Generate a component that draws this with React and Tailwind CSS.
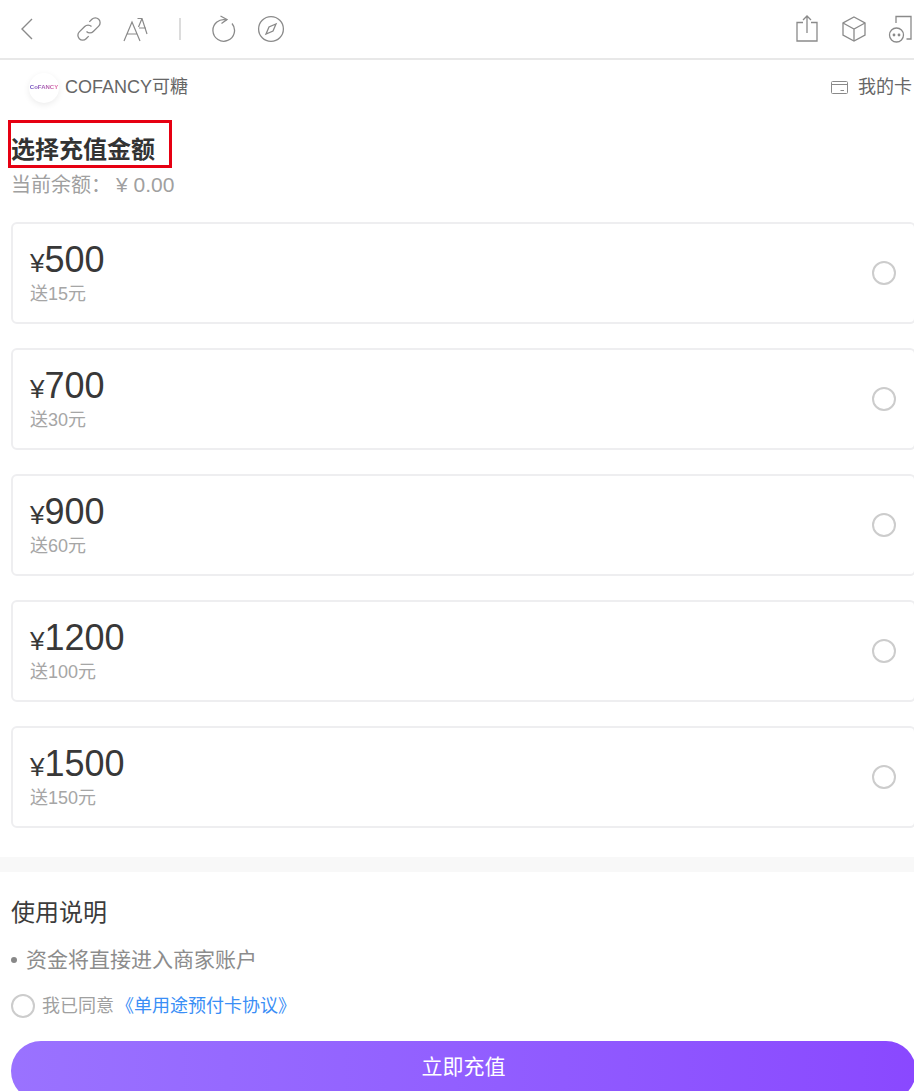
const font = { fontFamily: '"Liberation Sans", "Noto Sans CJK SC", sans-serif' };

const plans = [
    { amount: "500", bonus: "送15元" },
    { amount: "700", bonus: "送30元" },
    { amount: "900", bonus: "送60元" },
    { amount: "1200", bonus: "送100元" },
    { amount: "1500", bonus: "送150元" },
];

function BackIcon() {
    return (
        <svg width="16" height="24" viewBox="0 0 16 24" fill="none" stroke="#8a8a8a" strokeWidth="1.4">
            <path d="M12 2 L2 12 L12 22" />
        </svg>
    );
}

function LinkIcon() {
    return (
        <svg width="26" height="26" viewBox="0 0 26 26" fill="none" stroke="#8a8a8a" strokeWidth="1.3">
            <path d="M10.5 15.5 a4.8 4.8 0 0 0 6.8 0 l5.4 -5.4 a4.8 4.8 0 0 0 -6.8 -6.8 l-2.6 2.6" />
            <path d="M15.5 10.5 a4.8 4.8 0 0 0 -6.8 0 l-5.4 5.4 a4.8 4.8 0 0 0 6.8 6.8 l2.6 -2.6" />
        </svg>
    );
}

function FontSizeIcon() {
    return (
        <svg width="26" height="26" viewBox="0 0 26 26" fill="none" stroke="#8a8a8a" strokeWidth="1.2">
            <path d="M1 25 L9 6 L17 25 M4 18 H14" />
            <path d="M14.5 2.5 H19 L24 18 M16 12 H23 M19 2.5 L15.5 11" />
        </svg>
    );
}

function RefreshIcon() {
    return (
        <svg width="26" height="28" viewBox="0 0 26 28" fill="none" stroke="#8a8a8a" strokeWidth="1.3">
            <path d="M15.5 5 A10.8 10.8 0 1 0 21 8.5" />
            <path d="M9.5 1 L16 4.5 L10.5 8.5" />
        </svg>
    );
}

function CompassIcon() {
    return (
        <svg width="28" height="28" viewBox="0 0 28 28" fill="none" stroke="#8a8a8a" strokeWidth="1.3">
            <circle cx="14" cy="14" r="12.4" />
            <path d="M19 9 L16 16 L9 19 L12 12 Z" />
        </svg>
    );
}

function ShareIcon() {
    return (
        <svg width="22" height="28" viewBox="0 0 22 28" fill="none" stroke="#8a8a8a" strokeWidth="1.3">
            <path d="M7 7.5 H1 V26 H21 V7.5 H15" />
            <path d="M11 18 V1 M7 5 L11 1 L15 5" />
        </svg>
    );
}

function BoxIcon() {
    return (
        <svg width="24" height="26" viewBox="0 0 24 26" fill="none" stroke="#8a8a8a" strokeWidth="1.3">
            <path d="M12 1 L23 7 V19 L12 25 L1 19 V7 Z" />
            <path d="M1 7 L12 13 L23 7 M12 13 V25" />
        </svg>
    );
}

function MiniProgramIcon() {
    return (
        <svg width="26" height="28" viewBox="0 0 26 28" fill="none" stroke="#8a8a8a" strokeWidth="1.3">
            <path d="M8 8 V1.5 H23 V24 H18.5" />
            <circle cx="8.5" cy="20" r="7" />
            <circle cx="6" cy="20" r="1.4" fill="#8a8a8a" stroke="none" />
            <circle cx="11" cy="20" r="1.4" fill="#8a8a8a" stroke="none" />
        </svg>
    );
}

function CardIcon() {
    return (
        <svg width="17" height="13" viewBox="0 0 17 13" fill="none" stroke="#8a8a8a" strokeWidth="1">
            <rect x="0.5" y="0.5" width="16" height="12" rx="1" />
            <path d="M0.5 3.5 H16.5 M9.5 9.5 H13" />
        </svg>
    );
}

function Toolbar() {
    return (
        <div className="h-[60px] shrink-0 flex items-center border-b-2 border-[#e8e8e8]">
            <div className="ml-[20px]"><BackIcon /></div>
            <div className="ml-[40px]"><LinkIcon /></div>
            <div className="ml-[21px]"><FontSizeIcon /></div>
            <div className="ml-[30px] w-[2px] h-[22px] bg-[#dcdcdc]"></div>
            <div className="ml-[30px]"><RefreshIcon /></div>
            <div className="ml-[20px]"><CompassIcon /></div>
            <div className="ml-auto flex items-center">
                <ShareIcon />
                <div className="ml-[24px]"><BoxIcon /></div>
                <div className="ml-[22px] w-[26px]"><MiniProgramIcon /></div>
            </div>
        </div>
    );
}

function PlanCard({ amount, bonus }) {
    return (
        <div className="h-[102px] w-[905px] shrink-0 flex items-center justify-between pl-[17px] pr-[18px] border-2 border-[#eeeef0] rounded-[6px]">
            <div>
                <div className="h-[35px] flex items-baseline text-[#383838] text-[36px] leading-[36px]">
                    <span className="text-[26px]">¥</span>{amount}
                </div>
                <div className="mt-[7px] text-[#a6a6a6] text-[18px] leading-[20px]">{bonus}</div>
            </div>
            <div className="w-[24px] h-[24px] rounded-full border-2 border-[#cccccc]"></div>
        </div>
    );
}

export default function App() {
    return (
        <div className="relative w-[914px] h-[1091px] overflow-hidden bg-white" style={font}>
            <Toolbar />

            <div className="h-[54px] flex items-center justify-between pl-[29px] pt-[1px]">
                <div className="flex items-center">
                    <div className="w-[30px] h-[30px] rounded-full bg-white shadow-[0_2px_6px_rgba(0,0,0,0.08)] flex items-center justify-center">
                        <span className="text-[6px] font-bold whitespace-nowrap bg-gradient-to-r from-[#6a4fc0] to-[#e060a0] bg-clip-text text-transparent">CoFANCY</span>
                    </div>
                    <span className="ml-[6px] text-[18px] text-[#666666]">COFANCY可糖</span>
                </div>
                <div className="flex items-center text-[18px] text-[#666666]">
                    <CardIcon />
                    <span className="ml-[10px] w-[56px] whitespace-nowrap">我的卡</span>
                </div>
            </div>

            <div className="pl-[11px]">
                <div className="mt-[20px] text-[24px] leading-[32px] font-bold text-[#333333]">选择充值金额</div>
                <div className="mt-[4px] text-[20px] leading-[30px] text-[#a0a0a0]">
                    {"当前余额\uFF1A"}<span className="ml-[5px] text-[21px]">¥ 0.00</span>
                </div>
                <div className="mt-[22px] flex flex-col gap-[24px]">
                    {plans.map((p) => (
                        <PlanCard key={p.amount} amount={p.amount} bonus={p.bonus} />
                    ))}
                </div>
            </div>

            <div className="mt-[29px] h-[15px] bg-[#f8f8f8]"></div>

            <div className="pl-[11px]">
                <div className="mt-[24px] text-[24px] leading-[34px] text-[#3c3c3c]">使用说明</div>
                <div className="mt-[16px] flex items-center text-[21px] leading-[28px] text-[#8c8c8c]">
                    <span className="w-[6px] h-[6px] rounded-full bg-[#888888]"></span>
                    <span className="ml-[9px]">资金将直接进入商家账户</span>
                </div>
                <div className="mt-[19px] flex items-center text-[18px] leading-[24px]">
                    <div className="w-[24px] h-[24px] rounded-full border-2 border-[#cccccc]"></div>
                    <span className="ml-[7px] pt-[1px] text-[#a0a0a0]">我已同意</span>
                    <span className="ml-[2px] pt-[1px] text-[#3a8ef6]">《单用途预付卡协议》</span>
                </div>
                <div className="mt-[23px] w-[905px] h-[60px] rounded-full bg-gradient-to-r from-[#9a72ff] to-[#8a48ff] flex justify-center pt-[12px] text-[21px] leading-[28px] font-normal text-white">
                    立即充值
                </div>
            </div>

            <div className="absolute left-[8px] top-[120px] w-[164px] h-[48px] border-[3px] border-[#e60012]"></div>
        </div>
    );
}
